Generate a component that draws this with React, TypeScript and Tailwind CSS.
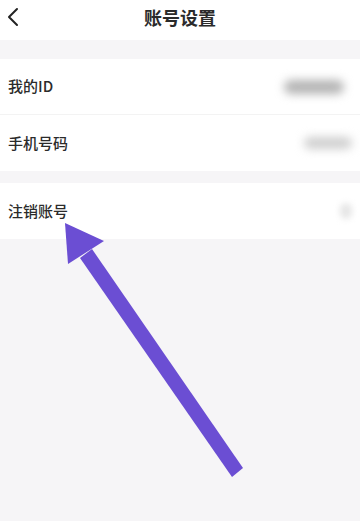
import React from 'react';

const font = { fontFamily: '"Noto Sans CJK SC", "Liberation Sans", sans-serif' };

const Row: React.FC<{ label: string; children?: React.ReactNode; border?: boolean }> = ({
  label,
  children,
  border,
}) => (
  <div
    className={`flex items-center justify-between h-[56px] pl-2 pr-3 bg-white ${
      border ? 'border-b border-[#f3f3f3]' : ''
    }`}
  >
    <span className="text-[15px] font-medium text-[#2b2b2b]">{label}</span>
    {children}
  </div>
);

const App: React.FC = () => {
  return (
    <div className="relative w-[360px] h-[521px] bg-[#f6f5f7] overflow-hidden" style={font}>
      {/* Header */}
      <div className="relative flex items-center justify-center h-[40px] bg-white">
        <svg
          className="absolute left-[6px] top-[7px]"
          width="14"
          height="20"
          viewBox="0 0 14 20"
          fill="none"
        >
          <path d="M11 2 L3 10 L11 18" stroke="#222" strokeWidth="2" strokeLinecap="round" strokeLinejoin="round" />
        </svg>
        <span className="text-[18px] font-semibold text-[#2a2a2a] -mt-[6px]">账号设置</span>
      </div>

      {/* Gap */}
      <div className="h-[19px]" />

      <Row label="我的ID" border>
        <div className="w-[60px] h-[14px] rounded-full bg-[#b4b4b4] blur-[5px] mr-1" />
      </Row>
      <Row label="手机号码">
        <div className="w-[48px] h-[12px] rounded-full bg-[#cfcfcf] blur-[5px] -mr-1" />
      </Row>

      <div className="h-[12px]" />

      <Row label="注销账号">
        <div className="w-[12px] h-[16px] rounded-full bg-[#e6e6e6] blur-[3px] -mr-1" />
      </Row>

      {/* Arrow overlay */}
      <svg className="absolute left-0 top-0" width="360" height="521" viewBox="0 0 360 521">
        <polygon points="80,258 92,249 243,468 232,477" fill="#6b4ed3" />
        <polygon points="65,223 104,241 68,264" fill="#6b4ed3" />
      </svg>
    </div>
  );
};

export default App;
